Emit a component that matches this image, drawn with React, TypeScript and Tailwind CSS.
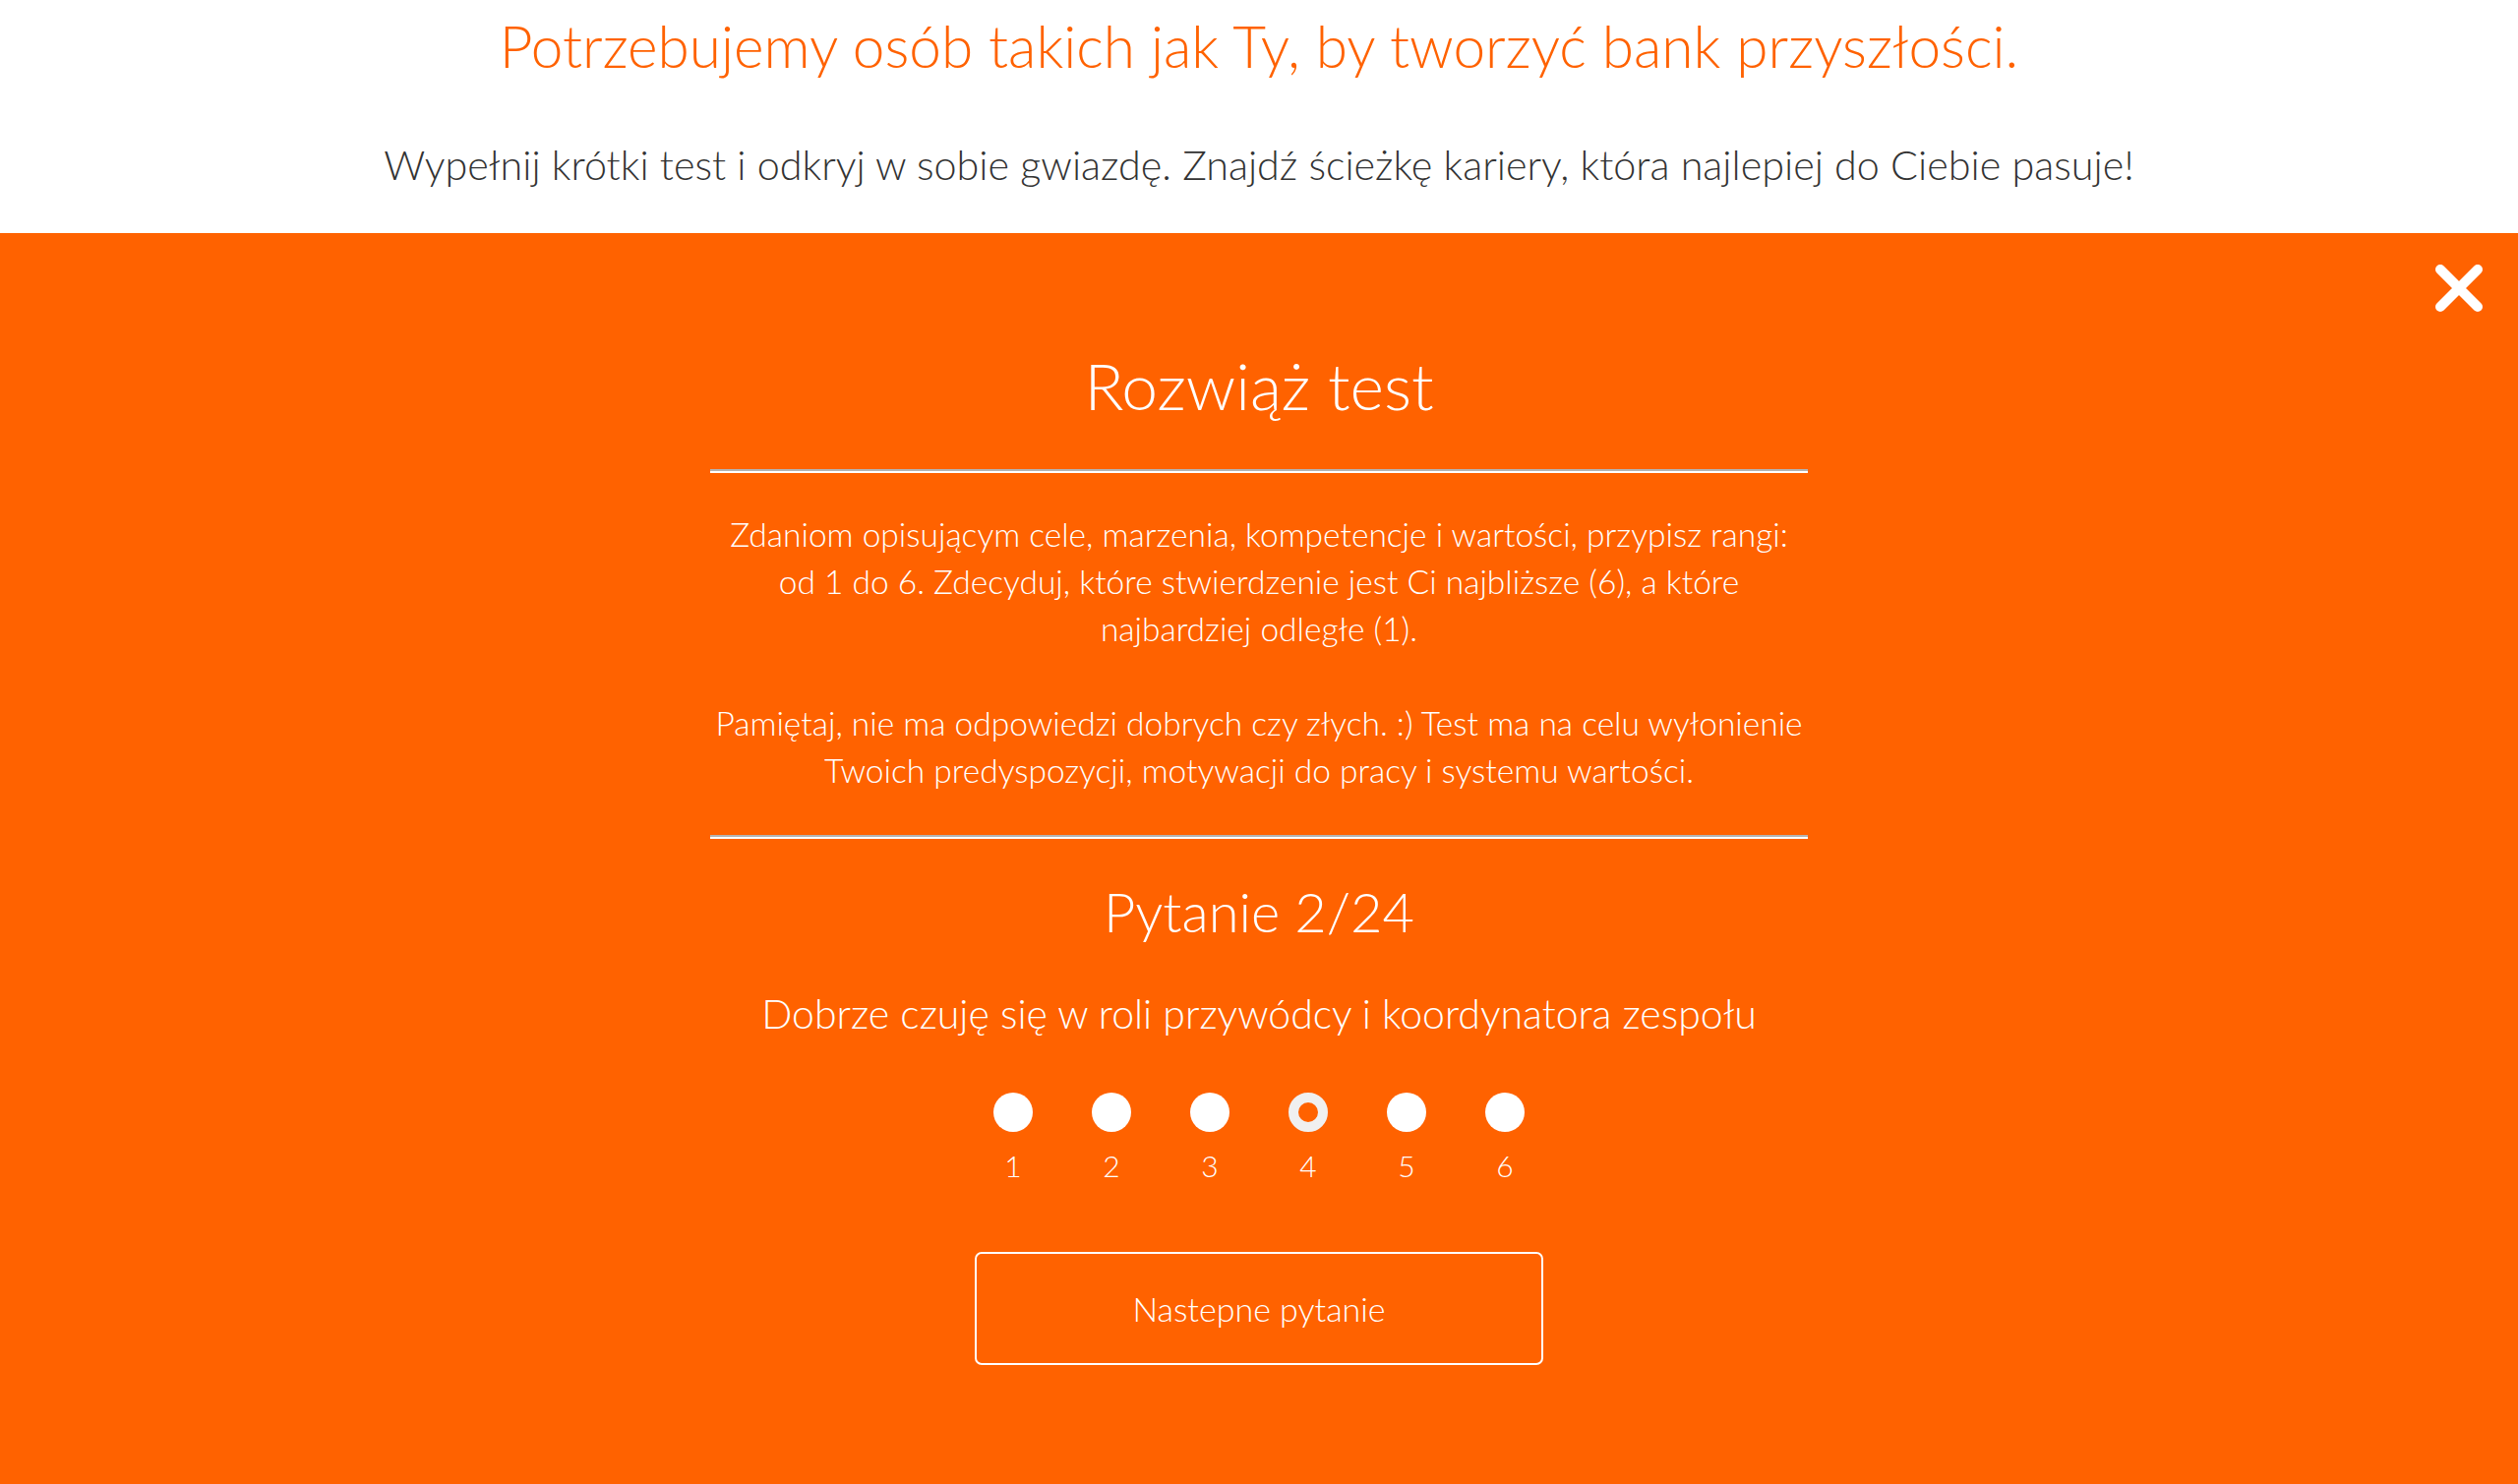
import React from "react";

const font = { fontFamily: "Lato, 'Open Sans', 'Noto Sans', sans-serif" };

export default function App() {
  const selected = 4;
  return (
    <div className="min-h-[1509px] w-full flex flex-col bg-[#ff6200]" style={font}>
      <header className="bg-white h-[237px] flex flex-col items-center">
        <h1 className="mt-[16px] text-[58.5px] leading-[60px] text-[#ff6200] font-light whitespace-nowrap">
          Potrzebujemy osób takich jak Ty, by tworzyć bank przyszłości.
        </h1>
        <p className="mt-[67px] text-[41.3px] leading-[48px] text-[#333333] font-light whitespace-nowrap">
          Wypełnij krótki test i odkryj w sobie gwiazdę. Znajdź ścieżkę kariery, która najlepiej do Ciebie pasuje!
        </p>
      </header>

      <section className="relative flex-1 flex flex-col items-center text-white pb-[121px]">
        <button className="absolute top-[32px] right-[36px] w-[48px] h-[48px]" aria-label="Zamknij">
          <svg viewBox="0 0 48 48" className="w-[48px] h-[48px]">
            <path d="M5 5 L43 43 M43 5 L5 43" stroke="#ffffff" strokeWidth="10" strokeLinecap="round" fill="none" />
          </svg>
        </button>

        <h2 className="mt-[119px] text-[66px] leading-[72px] font-light">Rozwiąż test</h2>

        <div className="mt-[49px] w-[1116px] border-t-2 border-b-2 border-t-[#b3b3b3] border-b-white" />

        <div className="mt-[38px] text-[33.5px] leading-[48px] text-center font-light">
          <p className="whitespace-nowrap">
            Zdaniom opisującym cele, marzenia, kompetencje i wartości, przypisz rangi:
            <br />
            od 1 do 6. Zdecyduj, które stwierdzenie jest Ci najbliższe (6), a które
            <br />
            najbardziej odległe (1).
          </p>
          <p className="mt-[48px] whitespace-nowrap">
            Pamiętaj, nie ma odpowiedzi dobrych czy złych. :) Test ma na celu wyłonienie
            <br />
            Twoich predyspozycji, motywacji do pracy i systemu wartości.
          </p>
        </div>

        <div className="mt-[42px] w-[1116px] border-t-2 border-b-2 border-t-[#b3b3b3] border-b-white" />

        <h3 className="mt-[42px] text-[56px] leading-[64px] font-light">Pytanie 2/24</h3>

        <p className="mt-[50px] text-[41px] leading-[44px] font-light">
          Dobrze czuję się w roli przywódcy i koordynatora zespołu
        </p>

        <div className="mt-[58px] flex">
          {[1, 2, 3, 4, 5, 6].map((n) => (
            <label key={n} className="w-[100px] flex flex-col items-center cursor-pointer">
              {n === selected ? (
                <span className="w-[40px] h-[40px] rounded-full border-[10px] border-[#f0f0f0] bg-[#ff6200]" />
              ) : (
                <span className="w-[40px] h-[40px] rounded-full bg-white" />
              )}
              <span className="mt-[16px] text-[30px] leading-[36px] font-light">{n}</span>
            </label>
          ))}
        </div>

        <button className="mt-[70px] w-[578px] h-[115px] rounded-[7px] border-2 border-white text-white text-[34px] leading-[36px] font-light">
          Nastepne pytanie
        </button>
      </section>
    </div>
  );
}
